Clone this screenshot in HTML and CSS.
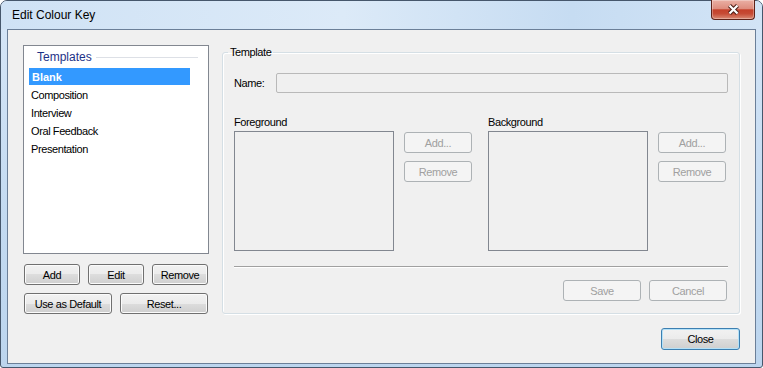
FILE: index.html
```html
<!DOCTYPE html>
<html>
<head>
    <title>Edit Colour Key</title>
    <meta charset="UTF-8">
    <link rel="stylesheet" href="styles.css">
</head>
<body>
    <div class="window">
        <div class="titlebar">
            <span class="title">Edit Colour Key</span>
            <button class="close-x" title="Close">
                <svg width="13" height="11" viewBox="0 0 13 11">
                    <path d="M2.5 1.5 L10.5 9.5 M10.5 1.5 L2.5 9.5" stroke="#4a1c14" stroke-width="4.2" fill="none"/>
                    <path d="M2.5 1.5 L10.5 9.5 M10.5 1.5 L2.5 9.5" stroke="#ffffff" stroke-width="2.2" fill="none"/>
                </svg>
            </button>
        </div>

        <div class="client">
            <div class="main">
                <div class="templates-panel">
                    <div class="listview">
                        <div class="group-header">
                            <span>Templates</span>
                            <span class="header-line"></span>
                        </div>
                        <div class="item selected">Blank</div>
                        <div class="item">Composition</div>
                        <div class="item">Interview</div>
                        <div class="item">Oral Feedback</div>
                        <div class="item">Presentation</div>
                    </div>
                    <div class="btn-row three">
                        <button class="btn">Add</button>
                        <button class="btn">Edit</button>
                        <button class="btn">Remove</button>
                    </div>
                    <div class="btn-row two">
                        <button class="btn">Use as Default</button>
                        <button class="btn">Reset...</button>
                    </div>
                </div>

                <fieldset class="group">
                    <legend>Template</legend>
                    <div class="group-body">
                        <div class="name-row">
                            <label for="nameInput">Name:</label>
                            <input type="text" class="textbox" id="nameInput" disabled>
                        </div>

                        <div class="colour-lists">
                            <div class="colour-block">
                                <div class="list-label">Foreground</div>
                                <div class="list-row">
                                    <div class="colour-list"></div>
                                    <div class="side-btns">
                                        <button class="btn" disabled>Add...</button>
                                        <button class="btn" disabled>Remove</button>
                                    </div>
                                </div>
                            </div>
                            <div class="colour-block">
                                <div class="list-label">Background</div>
                                <div class="list-row">
                                    <div class="colour-list"></div>
                                    <div class="side-btns">
                                        <button class="btn" disabled>Add...</button>
                                        <button class="btn" disabled>Remove</button>
                                    </div>
                                </div>
                            </div>
                        </div>

                        <div class="separator"></div>

                        <div class="form-actions">
                            <button class="btn" disabled>Save</button>
                            <button class="btn" disabled>Cancel</button>
                        </div>
                    </div>
                </fieldset>
            </div>

            <div class="dialog-actions">
                <button class="btn default">Close</button>
            </div>
        </div>
    </div>
</body>
</html>
```

FILE: styles.css
```css
* { margin: 0; padding: 0; box-sizing: border-box; }
body { background: #fff; font-family: 'Liberation Sans', Arial, sans-serif; font-size: 11px; letter-spacing: -0.4px; color: #000; }

/* window frame */
.window { width: 763px; height: 368px; display: flex; flex-direction: column; border: 1px solid #46576c; border-radius: 7px 7px 3px 3px; background: linear-gradient(180deg, #d6e6f7, #c3daf1 60%, #bcd5ee); }
.titlebar { height: 28px; display: flex; align-items: flex-start; background: linear-gradient(90deg, #cfe2f5, #dceaf8 45%, #c6dcf2 75%, #d2e4f6); border-radius: 6px 6px 0 0; }
.title { flex: 1; padding-left: 11px; font-size: 12px; line-height: 28px; letter-spacing: 0; }
.close-x { width: 44px; height: 20px; margin: -1px 7px 0 0; display: flex; align-items: center; justify-content: center; border: 1px solid #5e2219; border-top: none; border-radius: 0 0 4px 4px; background: linear-gradient(180deg, #eab0a5 0%, #de8d7e 45%, #c4412b 52%, #c64b35 72%, #da8a74 100%); box-shadow: inset 0 0 0 1px rgba(255,255,255,0.3); }

.client { flex: 1; margin: 0 6px 3px; border: 1px solid #6b7f98; background: #f0f0f0; padding: 15px 15px 0; }
.main { display: flex; gap: 13px; align-items: flex-start; }

/* left: templates list */
.templates-panel { width: 186px; display: flex; flex-direction: column; }
.listview { height: 209px; background: #fff; border: 1px solid #828790; }
.group-header { height: 22px; display: flex; align-items: center; padding-left: 13px; font-size: 12px; letter-spacing: 0; color: #1e3287; }
.header-line { flex: 1; height: 1px; margin: 0 10px 0 4px; background: #dde0e6; }
.item { width: 161px; height: 17px; margin: 0 0 1px 5px; padding: 1px 0 0 2px; line-height: 16px; }
.item.selected { background: #3399ff; color: #fff; font-weight: bold; letter-spacing: 0; padding-left: 3px; }

.btn-row { display: grid; gap: 8px; padding: 0 1px; margin-top: 10px; }
.btn-row.three { grid-template-columns: repeat(3, 56px); }
.btn-row.two { grid-template-columns: repeat(2, 88px); margin-top: 8px; }

/* buttons */
.btn { height: 21px; font-family: inherit; font-size: 11px; letter-spacing: -0.4px; color: #000; border: 1px solid #707070; border-radius: 3px; background: linear-gradient(180deg, #f2f2f2 0%, #ebebeb 50%, #dddddd 50%, #cfcfcf 100%); box-shadow: inset 0 0 0 1px #fbfbfb; }
.btn:disabled { color: #a0a0a0; border-color: #adb2b5; background: #f4f4f4; box-shadow: none; }
.btn.default { width: 79px; height: 22px; border-color: #3c7fb1; box-shadow: inset 0 0 0 1px #b4e1f8; }

/* right: template group */
.group { flex: 1; min-width: 0; height: 269px; border: 1px solid #d5dfe5; border-radius: 3px; box-shadow: inset 1px 1px 0 #fff, 1px 1px 0 #fff; }
.group legend { margin-left: 5px; padding: 0 2px; line-height: 14px; }
.group-body { padding: 14px 11px 12px; }

.name-row { display: flex; align-items: center; height: 20px; }
.name-row label { width: 42px; }
.textbox { flex: 1; height: 20px; border: 1px solid #b9b9b9; border-radius: 2px; background: #f0f0f0; }

.colour-lists { display: flex; gap: 16px; margin-top: 23px; }
.colour-block { width: 238px; }
.list-label { line-height: 13px; margin-bottom: 2px; }
.list-row { display: flex; gap: 10px; }
.colour-list { width: 160px; height: 120px; border: 1px solid #828790; }
.side-btns { width: 68px; display: flex; flex-direction: column; gap: 8px; margin-top: 1px; }

.separator { height: 2px; margin-top: 15px; border-top: 1px solid #a0a0a0; border-bottom: 1px solid #fff; }
.form-actions { display: flex; justify-content: flex-end; gap: 8px; margin-top: 12px; padding-right: 1px; }
.form-actions .btn { width: 78px; }

.dialog-actions { display: flex; justify-content: flex-end; margin-top: 14px; }
```
